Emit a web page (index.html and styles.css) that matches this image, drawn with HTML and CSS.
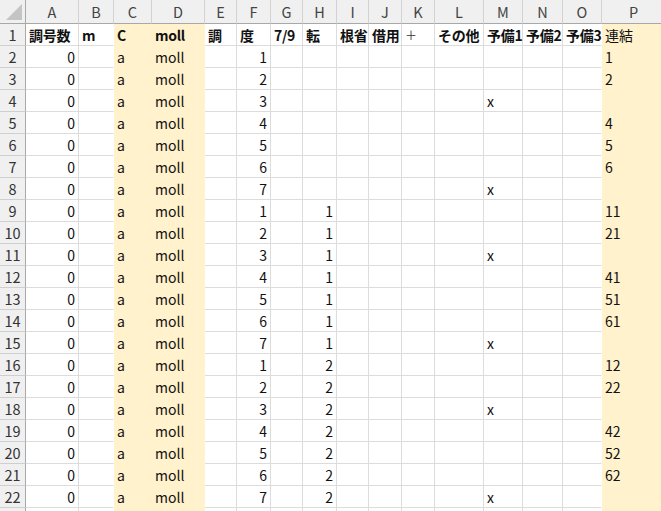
FILE: index.html
```html
<!DOCTYPE html>
<html lang="ja">
<head>
<meta charset="utf-8">
<title>Sheet</title>
<link rel="stylesheet" href="styles.css">
</head>
<body>
<table class="sheet">
<colgroup>
<col class="w-rh"><col class="w-a"><col class="w-b"><col class="w-c"><col class="w-d"><col class="w-e"><col class="w-f"><col class="w-g"><col class="w-h"><col class="w-i"><col class="w-j"><col class="w-k"><col class="w-l"><col class="w-m"><col class="w-n"><col class="w-o"><col class="w-p">
</colgroup>
<thead>
<tr class="hdr"><th class="corner"><span class="tri"></span></th><th>A</th><th>B</th><th>C</th><th>D</th><th>E</th><th>F</th><th>G</th><th>H</th><th>I</th><th>J</th><th>K</th><th>L</th><th>M</th><th>N</th><th>O</th><th>P</th></tr>
</thead>
<tbody>
<tr class="title"><th>1</th><td class="b">調号数</td><td class="b pre">m</td><td class="y b">C</td><td class="y b">moll</td><td class="b">調</td><td class="b">度</td><td class="b">7/9</td><td class="b">転</td><td class="b">根省</td><td class="b">借用</td><td class="plus">＋</td><td class="b">その他</td><td class="b">予備1</td><td class="b">予備2</td><td class="b pre">予備3</td><td class="y">連結</td></tr>
<tr><th>2</th><td class="r">0</td><td class="pre"></td><td class="y">a</td><td class="y">moll</td><td></td><td class="r">1</td><td></td><td></td><td></td><td></td><td></td><td></td><td></td><td></td><td class="pre"></td><td class="y">1</td></tr>
<tr><th>3</th><td class="r">0</td><td class="pre"></td><td class="y">a</td><td class="y">moll</td><td></td><td class="r">2</td><td></td><td></td><td></td><td></td><td></td><td></td><td></td><td></td><td class="pre"></td><td class="y">2</td></tr>
<tr><th>4</th><td class="r">0</td><td class="pre"></td><td class="y">a</td><td class="y">moll</td><td></td><td class="r">3</td><td></td><td></td><td></td><td></td><td></td><td></td><td>x</td><td></td><td class="pre"></td><td class="y"></td></tr>
<tr><th>5</th><td class="r">0</td><td class="pre"></td><td class="y">a</td><td class="y">moll</td><td></td><td class="r">4</td><td></td><td></td><td></td><td></td><td></td><td></td><td></td><td></td><td class="pre"></td><td class="y">4</td></tr>
<tr><th>6</th><td class="r">0</td><td class="pre"></td><td class="y">a</td><td class="y">moll</td><td></td><td class="r">5</td><td></td><td></td><td></td><td></td><td></td><td></td><td></td><td></td><td class="pre"></td><td class="y">5</td></tr>
<tr><th>7</th><td class="r">0</td><td class="pre"></td><td class="y">a</td><td class="y">moll</td><td></td><td class="r">6</td><td></td><td></td><td></td><td></td><td></td><td></td><td></td><td></td><td class="pre"></td><td class="y">6</td></tr>
<tr><th>8</th><td class="r">0</td><td class="pre"></td><td class="y">a</td><td class="y">moll</td><td></td><td class="r">7</td><td></td><td></td><td></td><td></td><td></td><td></td><td>x</td><td></td><td class="pre"></td><td class="y"></td></tr>
<tr><th>9</th><td class="r">0</td><td class="pre"></td><td class="y">a</td><td class="y">moll</td><td></td><td class="r">1</td><td></td><td class="r">1</td><td></td><td></td><td></td><td></td><td></td><td></td><td class="pre"></td><td class="y">11</td></tr>
<tr><th>10</th><td class="r">0</td><td class="pre"></td><td class="y">a</td><td class="y">moll</td><td></td><td class="r">2</td><td></td><td class="r">1</td><td></td><td></td><td></td><td></td><td></td><td></td><td class="pre"></td><td class="y">21</td></tr>
<tr><th>11</th><td class="r">0</td><td class="pre"></td><td class="y">a</td><td class="y">moll</td><td></td><td class="r">3</td><td></td><td class="r">1</td><td></td><td></td><td></td><td></td><td>x</td><td></td><td class="pre"></td><td class="y"></td></tr>
<tr><th>12</th><td class="r">0</td><td class="pre"></td><td class="y">a</td><td class="y">moll</td><td></td><td class="r">4</td><td></td><td class="r">1</td><td></td><td></td><td></td><td></td><td></td><td></td><td class="pre"></td><td class="y">41</td></tr>
<tr><th>13</th><td class="r">0</td><td class="pre"></td><td class="y">a</td><td class="y">moll</td><td></td><td class="r">5</td><td></td><td class="r">1</td><td></td><td></td><td></td><td></td><td></td><td></td><td class="pre"></td><td class="y">51</td></tr>
<tr><th>14</th><td class="r">0</td><td class="pre"></td><td class="y">a</td><td class="y">moll</td><td></td><td class="r">6</td><td></td><td class="r">1</td><td></td><td></td><td></td><td></td><td></td><td></td><td class="pre"></td><td class="y">61</td></tr>
<tr><th>15</th><td class="r">0</td><td class="pre"></td><td class="y">a</td><td class="y">moll</td><td></td><td class="r">7</td><td></td><td class="r">1</td><td></td><td></td><td></td><td></td><td>x</td><td></td><td class="pre"></td><td class="y"></td></tr>
<tr><th>16</th><td class="r">0</td><td class="pre"></td><td class="y">a</td><td class="y">moll</td><td></td><td class="r">1</td><td></td><td class="r">2</td><td></td><td></td><td></td><td></td><td></td><td></td><td class="pre"></td><td class="y">12</td></tr>
<tr><th>17</th><td class="r">0</td><td class="pre"></td><td class="y">a</td><td class="y">moll</td><td></td><td class="r">2</td><td></td><td class="r">2</td><td></td><td></td><td></td><td></td><td></td><td></td><td class="pre"></td><td class="y">22</td></tr>
<tr><th>18</th><td class="r">0</td><td class="pre"></td><td class="y">a</td><td class="y">moll</td><td></td><td class="r">3</td><td></td><td class="r">2</td><td></td><td></td><td></td><td></td><td>x</td><td></td><td class="pre"></td><td class="y"></td></tr>
<tr><th>19</th><td class="r">0</td><td class="pre"></td><td class="y">a</td><td class="y">moll</td><td></td><td class="r">4</td><td></td><td class="r">2</td><td></td><td></td><td></td><td></td><td></td><td></td><td class="pre"></td><td class="y">42</td></tr>
<tr><th>20</th><td class="r">0</td><td class="pre"></td><td class="y">a</td><td class="y">moll</td><td></td><td class="r">5</td><td></td><td class="r">2</td><td></td><td></td><td></td><td></td><td></td><td></td><td class="pre"></td><td class="y">52</td></tr>
<tr><th>21</th><td class="r">0</td><td class="pre"></td><td class="y">a</td><td class="y">moll</td><td></td><td class="r">6</td><td></td><td class="r">2</td><td></td><td></td><td></td><td></td><td></td><td></td><td class="pre"></td><td class="y">62</td></tr>
<tr><th>22</th><td class="r">0</td><td class="pre"></td><td class="y">a</td><td class="y">moll</td><td></td><td class="r">7</td><td></td><td class="r">2</td><td></td><td></td><td></td><td></td><td>x</td><td></td><td class="pre"></td><td class="y"></td></tr>
<tr class="cut"><th></th><td></td><td class="pre"></td><td class="y"></td><td class="y"></td><td></td><td></td><td></td><td></td><td></td><td></td><td></td><td></td><td></td><td></td><td class="pre"></td><td class="y"></td></tr>
</tbody>
</table>
</body>
</html>
```
FILE: styles.css
```css
html, body {
  margin: 0;
  padding: 0;
  background: #ffffff;
  overflow: hidden;
}

.sheet {
  table-layout: fixed;
  border-collapse: separate;
  border-spacing: 0;
  width: 666px;
  font-family: "Noto Sans CJK JP", "Noto Sans", sans-serif;
  font-size: 14px;
  color: #111;
}

.w-rh { width: 26px; }
.w-a { width: 53px; }
.w-b { width: 35px; }
.w-c { width: 38px; }
.w-d { width: 53px; }
.w-e { width: 32px; }
.w-f { width: 34px; }
.w-g { width: 32px; }
.w-h { width: 34px; }
.w-i { width: 32px; }
.w-j { width: 33px; }
.w-k { width: 33px; }
.w-l { width: 49px; }
.w-m { width: 39px; }
.w-n { width: 40px; }
.w-o { width: 39px; }
.w-p { width: 64px; }

.sheet td, .sheet th {
  box-sizing: border-box;
  padding: 0 3px;
  border-right: 1px solid #dcdcdc;
  border-bottom: 1px solid #dcdcdc;
  white-space: nowrap;
  overflow: visible;
  line-height: 20px;
  vertical-align: middle;
  text-align: left;
}

.hdr th {
  height: 24px;
  background: #f0f0f0;
  font-weight: normal;
  font-size: 14.5px;
  color: #444;
  text-align: center;
  padding: 0;
  border-right: 1px solid #d2d2d2;
  border-bottom: 1px solid #a8a8a8;
}

.sheet tbody tr {
  height: 22px;
}

.sheet tbody th {
  background: #f0f0f0;
  font-weight: normal;
  font-size: 14.5px;
  color: #333;
  text-align: center;
  padding: 0;
  border-right: 1px solid #a8a8a8;
  border-bottom: 1px solid #cfcfcf;
}

.hdr .corner {
  position: relative;
  border-right: 1px solid #a8a8a8;
}

.tri {
  position: absolute;
  right: 3px;
  bottom: 3px;
  width: 0;
  height: 0;
  border-left: 16px solid transparent;
  border-bottom: 16px solid #c4c4c4;
}

.sheet td.r { text-align: right; }
.sheet td.b { font-weight: bold; letter-spacing: -0.3px; }
.sheet td.plus { font-size: 12px; color: #333; }

.sheet td.y {
  background: #fff2cc;
  border-right-color: #fff2cc;
  border-bottom-color: #fff2cc;
}

.sheet td.pre {
  border-right-color: #ffffff;
}

.cut td, .cut th {
  height: 6px;
}
```
